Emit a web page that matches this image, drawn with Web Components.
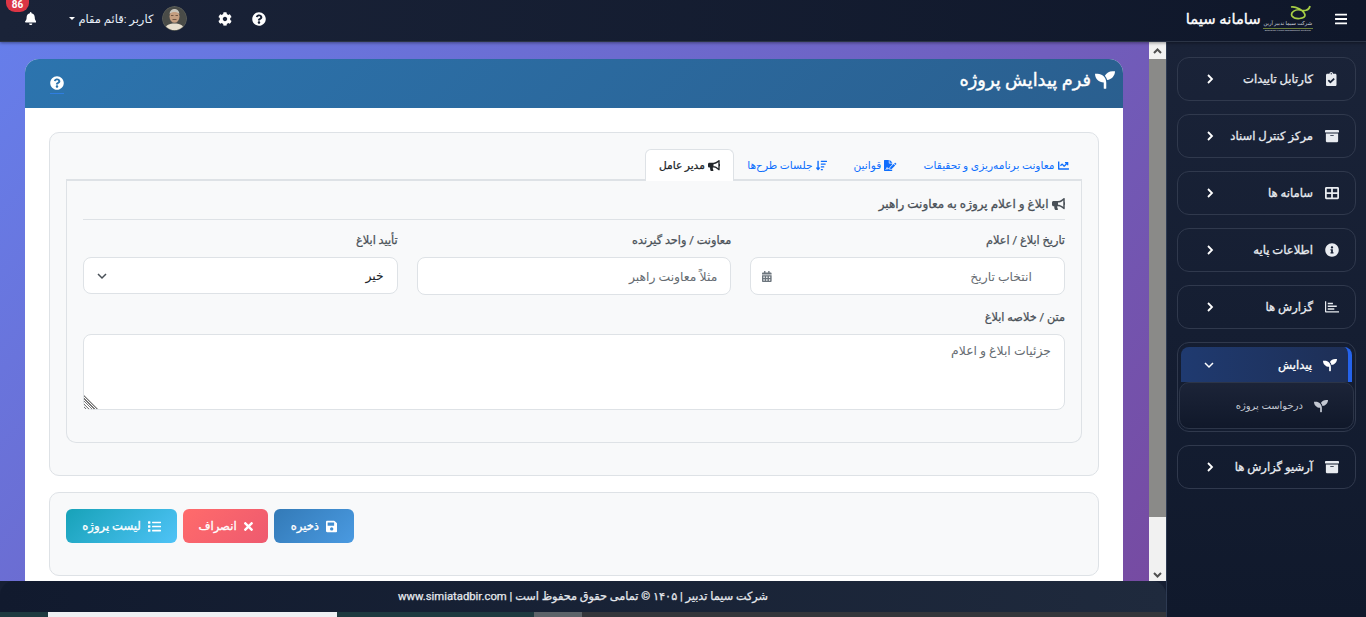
<!DOCTYPE html>
<html lang="fa">
<head>
<meta charset="utf-8">
<title>فرم پیدایش پروژه</title>
<style>
  html, body { margin: 0; height: 100%; overflow: hidden; }
  body { font-family: "Roboto", "DejaVu Sans", sans-serif; font-size: 12px; background: #161f33; }
</style>
</head>
<body>
<app-shell>
  <top-bar slot="top"></top-bar>
  <side-nav slot="side">
    <nav-item icon="clipboard">کارتابل تاییدات</nav-item>
    <nav-item icon="archive">مرکز کنترل اسناد</nav-item>
    <nav-item icon="grid">سامانه ها</nav-item>
    <nav-item icon="info">اطلاعات پایه</nav-item>
    <nav-item icon="report">گزارش ها</nav-item>
    <nav-item icon="seedling" open sub="درخواست پروژه">پیدایش</nav-item>
    <nav-item icon="archive">آرشیو گزارش ها</nav-item>
  </side-nav>
  <project-form slot="main"></project-form>
  <app-footer slot="footer"></app-footer>
</app-shell>

<script>
const ICONS = {
  bell: [448, 'M224 512c35.32 0 63.97-28.65 63.97-64H160.03c0 35.35 28.65 64 63.97 64zm215.39-149.71c-19.32-20.76-55.47-51.99-55.47-154.29 0-77.7-54.48-139.9-127.94-155.16V32c0-17.67-14.32-32-31.98-32s-31.98 14.33-31.98 32v20.84C118.56 68.1 64.08 130.3 64.08 208c0 102.3-36.15 133.53-55.47 154.29-6 6.45-8.66 14.16-8.61 21.71.11 16.4 12.98 32 32.1 32h383.8c19.12 0 32-15.6 32.1-32 .05-7.55-2.61-15.27-8.61-21.71z'],
  help: [512, 'M504 256c0 136.997-111.043 248-248 248S8 392.997 8 256C8 119.083 119.043 8 256 8s248 111.083 248 248zM262.655 90c-54.497 0-89.255 22.957-116.549 63.758-3.536 5.286-2.353 12.415 2.715 16.258l34.699 26.31c5.205 3.947 12.621 3.008 16.665-2.122 17.864-22.658 30.113-35.797 57.303-35.797 20.429 0 45.698 13.148 45.698 32.958 0 14.976-12.363 22.667-32.534 33.976C247.128 238.528 216 254.941 216 296v4c0 6.627 5.373 12 12 12h56c6.627 0 12-5.373 12-12v-1.333c0-28.462 83.186-29.647 83.186-106.667 0-58.002-60.165-102-116.531-102zM256 338c-25.365 0-46 20.635-46 46 0 25.364 20.635 46 46 46s46-20.636 46-46c0-25.365-20.635-46-46-46z'],
  seedling: [512, 'M64 96H0c0 123.7 100.3 224 224 224v144c0 8.8 7.2 16 16 16h32c8.8 0 16-7.2 16-16V320C288 196.3 187.7 96 64 96zm384-64c-84.2 0-157.4 46.5-195.7 115.2 27.7 30.2 48.2 66.9 59 107.6C424 243.1 512 147.9 512 32h-64z'],
  archive: [512, 'M32 448c0 17.7 14.3 32 32 32h384c17.7 0 32-14.3 32-32V160H32v288zm160-212c0-6.6 5.4-12 12-12h104c6.6 0 12 5.4 12 12v8c0 6.6-5.4 12-12 12H204c-6.6 0-12-5.4-12-12v-8zM480 32H32C14.3 32 0 46.3 0 64v48c0 8.8 7.2 16 16 16h480c8.8 0 16-7.2 16-16V64c0-17.7-14.3-32-32-32z'],
  clipboard: [384, 'M336 64h-80c0-35.3-28.7-64-64-64s-64 28.7-64 64H48C21.5 64 0 85.5 0 112v352c0 26.5 21.5 48 48 48h288c26.5 0 48-21.5 48-48V112c0-26.5-21.5-48-48-48zM192 40c13.3 0 24 10.7 24 24s-10.7 24-24 24-24-10.7-24-24 10.7-24 24-24zm121.2 231.8l-143 141.8c-4.7 4.7-12.3 4.6-17-.1l-82.6-83.3c-4.7-4.7-4.6-12.3.1-17L99.1 285c4.7-4.7 12.3-4.6 17 .1l46 46.4 106-105.2c4.7-4.7 12.3-4.6 17 .1l28.2 28.4c4.7 4.8 4.6 12.3-.1 17z'],
  grid: [512, 'M464 32H48C21.5 32 0 53.5 0 80v352c0 26.5 21.5 48 48 48h416c26.5 0 48-21.5 48-48V80c0-26.5-21.5-48-48-48zM224 416H64V288h160v128zm0-192H64V96h160v128zm224 192H288V288h160v128zm0-192H288V96h160v128z'],
  info: [512, 'M256 8C119.043 8 8 119.083 8 256c0 136.997 111.043 248 248 248s248-111.003 248-248C504 119.083 392.957 8 256 8zm0 110c23.196 0 42 18.804 42 42s-18.804 42-42 42-42-18.804-42-42 18.804-42 42-42zm56 254c0 6.627-5.373 12-12 12h-88c-6.627 0-12-5.373-12-12v-24c0-6.627 5.373-12 12-12h12v-64h-12c-6.627 0-12-5.373-12-12v-24c0-6.627 5.373-12 12-12h64c6.627 0 12 5.373 12 12v100h12c6.627 0 12 5.373 12 12v24z'],
  report: [512, 'M0 48h44v360h468v52H32c-17.7 0-32-14.300-32-32zM100 100h190v56H100zM100 200h330v56H100zM100 300h240v56H100z'],
  chart: [512, 'M496 384H64V80c0-8.84-7.16-16-16-16H16C7.16 64 0 71.16 0 80v336c0 17.67 14.33 32 32 32h464c8.84 0 16-7.16 16-16v-32c0-8.84-7.16-16-16-16zM464 96H345.94c-21.38 0-32.09 25.85-16.97 40.97l32.4 32.4L288 242.75l-73.37-73.37c-12.5-12.5-32.76-12.5-45.25 0l-68.69 68.69c-6.25 6.25-6.25 16.38 0 22.63l22.62 22.62c6.25 6.25 16.38 6.25 22.63 0L192 237.25l73.37 73.37c12.5 12.5 32.76 12.5 45.25 0l96-96 32.4 32.4c15.12 15.12 40.97 4.41 40.97-16.97V112c.01-8.84-7.15-16-15.99-16z'],
  bullhorn: [576, 'M576 240c0-23.63-12.95-44.04-32-55.12V32.01C544 23.26 537.02 0 512 0c-7.12 0-14.19 2.38-19.98 7.02l-85.03 68.03C364.28 109.19 310.66 128 256 128H64c-35.35 0-64 28.65-64 64v96c0 35.35 28.65 64 64 64h33.7c-1.39 10.48-2.18 21.14-2.18 32 0 39.77 9.26 77.35 25.56 110.94 5.19 10.69 16.52 17.06 28.4 17.06h74.28c26.05 0 41.69-29.84 25.9-50.56-16.4-21.52-26.15-48.36-26.15-77.44 0-11.11 1.62-21.79 4.41-32H256c54.66 0 108.28 18.81 150.98 52.95l85.03 68.03a32.023 32.023 0 0 0 19.98 7.02c24.92 0 32-22.78 32-32V295.13C563.05 284.04 576 263.63 576 240zm-96 141.42l-33.05-26.44C392.95 311.78 325.12 288 256 288v-96c69.12 0 136.95-23.78 190.95-66.98L480 98.58v282.84z'],
  save: [448, 'M433.941 129.941l-83.882-83.882A48 48 0 0 0 316.118 32H48C21.49 32 0 53.49 0 80v352c0 26.51 21.49 48 48 48h352c26.51 0 48-21.49 48-48V163.882a48 48 0 0 0-14.059-33.941zM224 416c-35.346 0-64-28.654-64-64 0-35.346 28.654-64 64-64s64 28.654 64 64c0 35.346-28.654 64-64 64zm96-304.52V212c0 6.627-5.373 12-12 12H76c-6.627 0-12-5.373-12-12V108c0-6.627 5.373-12 12-12h228.52c3.183 0 6.235 1.264 8.485 3.515l3.48 3.48A11.996 11.996 0 0 1 320 111.48z'],
  times: [352, 'M242.72 256l100.07-100.07c12.28-12.28 12.28-32.19 0-44.48l-22.24-22.24c-12.28-12.28-32.19-12.28-44.48 0L176 189.28 75.93 89.21c-12.28-12.28-32.19-12.28-44.48 0L9.21 111.45c-12.28 12.28-12.28 32.19 0 44.48L109.28 256 9.21 356.07c-12.28 12.28-12.28 32.19 0 44.48l22.24 22.24c12.28 12.28 32.2 12.28 44.48 0L176 322.72l100.07 100.07c12.28 12.28 32.2 12.28 44.48 0l22.24-22.24c12.28-12.28 12.28-32.19 0-44.48L242.72 256z'],
  list: [512, 'M80 368H16a16 16 0 0 0-16 16v64a16 16 0 0 0 16 16h64a16 16 0 0 0 16-16v-64a16 16 0 0 0-16-16zm0-320H16A16 16 0 0 0 0 64v64a16 16 0 0 0 16 16h64a16 16 0 0 0 16-16V64a16 16 0 0 0-16-16zm0 160H16a16 16 0 0 0-16 16v64a16 16 0 0 0 16 16h64a16 16 0 0 0 16-16v-64a16 16 0 0 0-16-16zm416 176H176a16 16 0 0 0-16 16v32a16 16 0 0 0 16 16h320a16 16 0 0 0 16-16v-32a16 16 0 0 0-16-16zm0-320H176a16 16 0 0 0-16 16v32a16 16 0 0 0 16 16h320a16 16 0 0 0 16-16V80a16 16 0 0 0-16-16zm0 160H176a16 16 0 0 0-16 16v32a16 16 0 0 0 16 16h320a16 16 0 0 0 16-16v-32a16 16 0 0 0-16-16z'],
  calendar: [448, 'M0 464c0 26.5 21.5 48 48 48h352c26.5 0 48-21.5 48-48V192H0v272zm320-196c0-6.6 5.4-12 12-12h40c6.6 0 12 5.4 12 12v40c0 6.6-5.4 12-12 12h-40c-6.6 0-12-5.4-12-12v-40zm0 128c0-6.6 5.4-12 12-12h40c6.6 0 12 5.4 12 12v40c0 6.6-5.4 12-12 12h-40c-6.6 0-12-5.4-12-12v-40zM192 268c0-6.6 5.4-12 12-12h40c6.6 0 12 5.4 12 12v40c0 6.6-5.4 12-12 12h-40c-6.6 0-12-5.4-12-12v-40zm0 128c0-6.6 5.4-12 12-12h40c6.6 0 12 5.4 12 12v40c0 6.6-5.4 12-12 12h-40c-6.6 0-12-5.4-12-12v-40zM64 268c0-6.6 5.4-12 12-12h40c6.6 0 12 5.4 12 12v40c0 6.6-5.4 12-12 12H76c-6.6 0-12-5.4-12-12v-40zm0 128c0-6.6 5.4-12 12-12h40c6.6 0 12 5.4 12 12v40c0 6.6-5.4 12-12 12H76c-6.6 0-12-5.4-12-12v-40zM400 64h-48V16c0-8.8-7.2-16-16-16h-32c-8.8 0-16 7.2-16 16v48H160V16c0-8.8-7.2-16-16-16h-32c-8.8 0-16 7.2-16 16v48H48C21.5 64 0 85.5 0 112v48h448v-48c0-26.5-21.5-48-48-48z'],
  bars: [448, 'M16 132h416c8.837 0 16-7.163 16-16V76c0-8.837-7.163-16-16-16H16C7.163 60 0 67.163 0 76v40c0 8.837 7.163 16 16 16zm0 160h416c8.837 0 16-7.163 16-16v-40c0-8.837-7.163-16-16-16H16c-8.837 0-16 7.163-16 16v40c0 8.837 7.163 16 16 16zm0 160h416c8.837 0 16-7.163 16-16v-40c0-8.837-7.163-16-16-16H16c-8.837 0-16 7.163-16 16v40c0 8.837 7.163 16 16 16z'],
  cog: [512, 'M487.4 315.7l-42.6-24.6c4.3-23.2 4.3-47 0-70.2l42.6-24.6c4.9-2.8 7.1-8.6 5.5-14-11.1-35.6-30-67.8-54.7-94.6-3.8-4.1-10-5.1-14.8-2.3L380.8 110c-17.9-15.4-38.5-27.3-60.8-35.1V25.8c0-5.6-3.9-10.5-9.4-11.7-36.7-8.2-74.3-7.8-109.2 0-5.5 1.2-9.4 6.1-9.4 11.7V75c-22.2 7.9-42.8 19.8-60.8 35.1L88.7 85.5c-4.9-2.8-11-1.9-14.8 2.3-24.7 26.7-43.6 58.9-54.7 94.6-1.7 5.4.6 11.2 5.5 14L67.3 221c-4.3 23.2-4.3 47 0 70.2l-42.6 24.6c-4.9 2.8-7.1 8.6-5.5 14 11.1 35.6 30 67.8 54.7 94.6 3.8 4.1 10 5.1 14.8 2.3l42.6-24.6c17.9 15.4 38.5 27.3 60.8 35.1v49.2c0 5.6 3.9 10.5 9.4 11.7 36.7 8.2 74.3 7.8 109.2 0 5.5-1.2 9.4-6.1 9.4-11.7v-49.2c22.2-7.9 42.8-19.8 60.8-35.1l42.6 24.6c4.9 2.8 11 1.9 14.8-2.3 24.7-26.7 43.6-58.9 54.7-94.6 1.5-5.5-.7-11.3-5.6-14.1zM256 336c-44.1 0-80-35.9-80-80s35.9-80 80-80 80 35.9 80 80-35.9 80-80 80z'],
  sign: [576, 'M218.17 424.14c-2.95-5.92-8.09-6.52-10.17-6.52s-7.22.59-10.02 6.19l-7.67 15.34c-6.37 12.78-25.03 11.37-29.48-2.09L144 386.59l-10.61 31.88c-5.89 17.66-22.38 29.53-41 29.53H80c-8.84 0-16-7.16-16-16s7.16-16 16-16h12.39c4.83 0 9.11-3.08 10.64-7.66l18.19-54.64c3.3-9.81 12.44-16.41 22.78-16.41s19.48 6.59 22.77 16.41l13.88 41.64c19.75-16.19 54.06-9.7 66 14.16 1.89 3.78 5.49 5.95 9.36 6.26v-82.12l128-127.09V160H248c-13.2 0-24-10.8-24-24V0H24C10.7 0 0 10.7 0 24v464c0 13.3 10.7 24 24 24h336c13.3 0 24-10.7 24-24v-40l-128-.11c-16.12-.31-30.58-9.28-37.83-23.75zM384 121.9c0-6.3-2.5-12.4-7-16.9L279.1 7c-4.5-4.5-10.6-7-17-7H256v128h128v-6.1zm-96 225.06V416h68.99l161.68-162.78-67.88-67.88L288 346.96zm280.54-179.63l-31.87-31.87c-9.94-9.94-26.07-9.94-36.01 0l-27.25 27.25 67.88 67.88 27.25-27.25c9.95-9.94 9.95-26.07 0-36.01z'],
  sort: [512, 'M304 416h-64a16 16 0 0 0-16 16v32a16 16 0 0 0 16 16h64a16 16 0 0 0 16-16v-32a16 16 0 0 0-16-16zm-128-64h-48V48a16 16 0 0 0-16-16H80a16 16 0 0 0-16 16v304H16c-14.19 0-21.37 17.24-11.29 27.31l80 96a16 16 0 0 0 22.62 0l80-96C197.35 369.26 190.22 352 176 352zm256-192H240a16 16 0 0 0-16 16v32a16 16 0 0 0 16 16h192a16 16 0 0 0 16-16v-32a16 16 0 0 0-16-16zm-64 128H240a16 16 0 0 0-16 16v32a16 16 0 0 0 16 16h128a16 16 0 0 0 16-16v-32a16 16 0 0 0-16-16zM496 32H240a16 16 0 0 0-16 16v32a16 16 0 0 0 16 16h256a16 16 0 0 0 16-16V48a16 16 0 0 0-16-16z'],
};

class FaIcon extends HTMLElement {
  connectedCallback() {
    const [w, d] = ICONS[this.getAttribute('name')];
    const size = this.getAttribute('size') || 12;
    this.attachShadow({ mode: 'open' });
    this.shadowRoot.innerHTML = `
      <style>:host { display: inline-flex; flex: none; justify-content: center; -webkit-text-stroke: 0; } svg { display: block; fill: currentColor; height: ${size}px; }</style>
      <svg viewBox="0 0 ${w} 512"><path d="${d}"/></svg>`;
  }
}
customElements.define('fa-icon', FaIcon);

const CHEV_LEFT = '<svg width="10" height="10" viewBox="0 0 10 10" fill="none" stroke="currentColor" stroke-width="1.8"><path d="M3 1l4 4-4 4"/></svg>';
const CHEV_DOWN = '<svg width="10" height="10" viewBox="0 0 10 10" fill="none" stroke="currentColor" stroke-width="1.5"><path d="M1 3l4 4 4-4"/></svg>';

class AppShell extends HTMLElement {
  constructor() {
    super();
    this.attachShadow({ mode: 'open' });
    this.shadowRoot.innerHTML = `
      <style>
        :host { display: grid; height: 617px; width: 1366px; overflow: hidden;
          grid-template-columns: 1166px 200px; grid-template-rows: 42px 539px 31px 5px; background: #161f33; }
        .top { grid-column: 1 / 3; grid-row: 1; }
        .main { grid-column: 1; grid-row: 2; display: flex; min-height: 0; overflow: hidden; }
        .canvas { flex: 1; min-width: 0; overflow: hidden; background: linear-gradient(135deg, #667eea 0%, #764ba2 100%); }
        .side { grid-column: 2; grid-row: 2 / 5; min-height: 0; }
        .foot { grid-column: 1; grid-row: 3; }
        .strip { grid-column: 1; grid-row: 4; display: flex; background: #1e3a40; }
        .strip i:nth-child(1) { width: 48px; }
        .strip i:nth-child(2) { width: 289px; background: #eef0f3; }
        .strip i:nth-child(3) { width: 197px; }
        .strip i:nth-child(4) { width: 48px; background: #5c6369; }
        .strip i:nth-child(5) { flex: 1; background: #34363b; }
        .bar { width: 17px; background: #8a8a88; display: flex; flex-direction: column; flex: none; }
        .bar b { height: 17px; background: #f1f1f1; color: #505050; display: flex; align-items: center; justify-content: center; }
        .bar span { flex: 1; }
        .bar em { height: 64px; background: #f1f1f1; display: flex; flex-direction: column; justify-content: flex-end; color: #505050; align-items: center; font-style: normal; padding-bottom: 3px; box-sizing: border-box; }
      </style>
      <div class="top"><slot name="top"></slot></div>
      <div class="main">
        <div class="canvas"><slot name="main"></slot></div>
        <div class="bar">
          <b><svg width="9" height="6" viewBox="0 0 9 6" fill="none" stroke="currentColor" stroke-width="2"><path d="M1 5l3.5-3.5L8 5"/></svg></b>
          <span></span>
          <em><svg width="9" height="6" viewBox="0 0 9 6" fill="none" stroke="currentColor" stroke-width="2"><path d="M1 1l3.5 3.5L8 1"/></svg></em>
        </div>
      </div>
      <div class="side"><slot name="side"></slot></div>
      <div class="foot"><slot name="footer"></slot></div>
      <div class="strip"><i></i><i></i><i></i><i></i><i></i></div>`;
  }
}
customElements.define('app-shell', AppShell);

class TopBar extends HTMLElement {
  constructor() {
    super();
    this.attachShadow({ mode: 'open' });
    this.shadowRoot.innerHTML = `
      <style>
        :host { display: flex; align-items: center; height: 42px; box-sizing: border-box; padding-bottom: 4px; color: #fff;
          background: linear-gradient(90deg, #1a2338 0%, #0f172a 100%); border-bottom: 1px solid #2b3446;
          box-shadow: 0 1px 3px rgba(0,0,0,.4); position: relative; }
        .bell { margin-left: 25px; position: relative; display: flex; color: #fff; }
        .badge { position: absolute; top: -12px; left: -19px; width: 23px; height: 12px; background: #dc3545;
          border-radius: 0 0 9px 9px; font: bold 10px/10px "Roboto", sans-serif; text-align: center; color: #fff; }
        .user { display: flex; align-items: center; margin-left: 33px; font-size: 11.5px; color: #e8f0fa; gap: 3px; }
        .caret { width: 0; height: 0; border: 3px solid transparent; border-top-color: #fff; border-bottom: 0; }
        .avatar { width: 25px; height: 25px; border-radius: 50%; display: block; margin-left: 6px; }
        .gear { margin-left: 31px; display: flex; }
        .help { margin-left: 20px; display: flex; }
        .spacer { flex: 1; }
        .brand { font-size: 14.8px; -webkit-text-stroke: .35px currentColor; direction: rtl; margin-right: 2px; }
        .logo { width: 50px; height: 34px; position: relative; direction: rtl; margin-right: 22px; text-align: center; color: #cfd6dd; margin-top: 6px; }
        .logo svg { position: absolute; left: 27px; top: 0; }
        .logo small { position: absolute; right: 0; left: 0; top: 15px; font-size: 5.2px; line-height: 7px; white-space: nowrap; }
        .logo u { position: absolute; right: 0; left: 0; top: 23px; text-decoration: none; font: 2.5px/4px "Roboto", sans-serif; white-space: nowrap; border-top: 1px solid #6a7f3a; }
        .menu { margin-right: 19px; display: flex; }
      </style>
      <span class="bell"><span class="badge">86</span><fa-icon name="bell" size="13"></fa-icon></span>
      <div class="user">
        <span class="caret"></span>
        <span dir="rtl">کاربر :قائم مقام</span>
        <svg class="avatar" viewBox="0 0 25 25">
          <circle cx="12.5" cy="12.5" r="12.5" fill="#5b5d58"/>
          <clipPath id="av"><circle cx="12.5" cy="12.5" r="11.6"/></clipPath>
          <g clip-path="url(#av)">
            <rect width="25" height="25" fill="#4a4c48"/>
            <path d="M2 26c1-7 5-8.500 10.500-8.500S22 19 23 26z" fill="#e8e0cf"/>
            <ellipse cx="12.500" cy="10.500" rx="5" ry="6.300" fill="#c49e80"/>
            <path d="M7.500 8c.5-4 3-5 5-5s4.500 1 5 5c-1.500-1.500-3-2-5-2s-3.500.5-5 2z" fill="#c9c6bd"/>
            <path d="M9 9.500h2.500M13.500 9.500H16M10.500 13.500h4" stroke="#5e4636" stroke-width=".8"/>
          </g>
        </svg>
      </div>
      <span class="gear"><fa-icon name="cog" size="14"></fa-icon></span>
      <span class="help"><fa-icon name="help" size="14"></fa-icon></span>
      <span class="spacer"></span>
      <span class="brand">سامانه سیما</span>
      <div class="logo">
        <svg width="22" height="16" viewBox="0 0 22 16" fill="none" stroke="#a8cf45" stroke-width="1.700">
          <path d="M1 2C5 1 14 5 15 10 15 14 5 15 2 11 0 7 6 4 10 5 14 6 19 6 20 1"/>
        </svg>
        <small>شرکت سیما تدبیر آرین</small>
        <u>Enterprise Project Management Solutions</u>
      </div>
      <span class="menu"><fa-icon name="bars" size="14"></fa-icon></span>`;
  }
}
customElements.define('top-bar', TopBar);

class SideNav extends HTMLElement {
  constructor() {
    super();
    this.attachShadow({ mode: 'open' });
    this.shadowRoot.innerHTML = `
      <style>
        :host { display: flex; flex-direction: column; gap: 13px; height: 100%; box-sizing: border-box; padding: 15px 10px 0 10px;
          background: linear-gradient(180deg, #1a2338, #10192c); border-left: 1px solid #2d3a52; }
      </style>
      <slot></slot>`;
  }
}
customElements.define('side-nav', SideNav);

class NavItem extends HTMLElement {
  constructor() {
    super();
    this.attachShadow({ mode: 'open' });
  }
  connectedCallback() {
    const open = this.hasAttribute('open');
    this.shadowRoot.innerHTML = `
      <style>
        :host { display: block; box-sizing: border-box; direction: rtl; border: 1px solid #30394d; border-radius: 12px; color: #e8ebf0; font-size: 11.6px; }
        :host([open]) { padding: 4px 3px 2px; position: relative; }
        .row { display: flex; align-items: center; height: 42px; padding-right: 16px; }
        .row fa-icon { width: 15px; }
        .label { margin-right: 11px; flex: 1; white-space: nowrap; -webkit-text-stroke: .3px currentColor; }
        .chev { margin-left: 27px; display: flex; color: #fff; }
        :host([open]) .row { height: 35px; background: linear-gradient(90deg, #1f3a70, #1e2f56); border-right: 4px solid #2563eb; border-radius: 8px 8px 0 0; color: #fff; padding-right: 11px; box-sizing: border-box; }
        :host([open]) .label { margin-right: 10px; }
        :host([open]) .chev { margin-left: 23px; }
        .sub { height: 47px; margin: 0 -2px; box-sizing: border-box; border: 1px solid #2c3548; border-radius: 10px; display: flex; align-items: center;
          padding-right: 25px; gap: 10px; font-size: 10px; color: #c3c8d2; background: linear-gradient(180deg, #1c2438, #10182a); position: relative; }
        .sub fa-icon { width: 15px; }
      </style>
      <div class="row">
        <fa-icon name="${this.getAttribute('icon')}" size="14"></fa-icon>
        <span class="label"><slot></slot></span>
        <span class="chev">${open ? CHEV_DOWN : CHEV_LEFT}</span>
      </div>
      ${open ? `<div class="sub"><fa-icon name="seedling" size="14"></fa-icon><span>${this.getAttribute('sub')}</span></div>` : ''}`;
  }
}
customElements.define('nav-item', NavItem);

class FormField extends HTMLElement {
  constructor() {
    super();
    this.attachShadow({ mode: 'open' });
  }
  connectedCallback() {
    const kind = this.getAttribute('kind');
    const value = this.getAttribute('value');
    let inner = `<div class="box"><span>${value}</span></div>`;
    if (kind === 'date') inner = `<div class="box date"><span>${value}</span><fa-icon name="calendar" size="11"></fa-icon></div>`;
    if (kind === 'select') inner = `<div class="box select"><span>${value}</span>${CHEV_DOWN}</div>`;
    if (kind === 'area') inner = `<div class="box area"><span>${value}</span><i></i></div>`;
    this.shadowRoot.innerHTML = `
      <style>
        :host { display: block; direction: rtl; }
        label { display: block; font-size: 11.3px; -webkit-text-stroke: .25px currentColor; color: #495057; line-height: 14px; margin-bottom: 9px; }
        .box { height: 38px; box-sizing: border-box; background: #fff; border: 1px solid #dee2e6; border-radius: 8px; padding: 0 13px; display: flex; align-items: center; font-size: 12.4px; color: #666c72; }
        .date { justify-content: space-between; padding: 0 32px 0 11px; }
        .date fa-icon { color: #6c757d; }
        .select { justify-content: space-between; color: #212529; height: 37px; }
        .select svg { color: #495057; }
        .area { height: 76px; align-items: flex-start; padding-top: 8px; position: relative; }
        .area i { position: absolute; left: 0; bottom: 0; width: 14px; height: 14px; background: repeating-linear-gradient(45deg, transparent 0 1px, #777 1px 2px); clip-path: polygon(0 0, 100% 100%, 0 100%); }
      </style>
      <label>${this.getAttribute('label')}</label>
      ${inner}`;
  }
}
customElements.define('form-field', FormField);

class GradButton extends HTMLElement {
  constructor() {
    super();
    this.attachShadow({ mode: 'open' });
  }
  connectedCallback() {
    this.shadowRoot.innerHTML = `
      <style>
        :host { display: inline-flex; align-items: center; justify-content: center; gap: 7px; height: 34px; box-sizing: border-box; direction: rtl; white-space: nowrap;
          border-radius: 6px; color: #fff; font-size: 11.6px; -webkit-text-stroke: .3px currentColor; background: var(--bg); }
      </style>
      <fa-icon name="${this.getAttribute('icon')}" size="13"></fa-icon><slot></slot>`;
  }
}
customElements.define('grad-button', GradButton);

class ProjectForm extends HTMLElement {
  constructor() {
    super();
    this.attachShadow({ mode: 'open' });
    this.shadowRoot.innerHTML = `
      <style>
        :host { display: block; padding: 17px 26px 0 25px; height: 100%; box-sizing: border-box; }
        .card { border-radius: 14px 14px 0 0; background: #fff; height: 522px; }
        .head { height: 49px; border-radius: 14px 14px 0 0; background: linear-gradient(135deg, #2c74ae, #2a5f8f); color: #fff; display: flex; align-items: center; justify-content: space-between; padding: 0 8px 0 25px; }
        .head h1 { margin: 0 0 8px; font-size: 17.8px; font-weight: 400; -webkit-text-stroke: .4px currentColor; direction: rtl; display: flex; align-items: center; gap: 4px; }
        .head .q { display: flex; border-bottom: 1px solid #2f7de0; padding-bottom: 3px; margin-top: 3px; }
        .body { padding: 24px 24px 0; }
        .panel { background: #f8f9fa; border: 1px solid #dee2e6; border-radius: 10px; box-sizing: border-box; }
        .main { height: 344px; padding: 16px 16px 0; }
        nav { display: flex; direction: rtl; height: 30px; border-bottom: 2px solid #dee2e6; }
        nav a { display: flex; align-items: center; gap: 3px; padding: 0 13.5px; color: #0d6efd; font-size: 10.6px; height: 32px; box-sizing: border-box; white-space: nowrap; }
        nav a.active { background: #fff; color: #212529; -webkit-text-stroke: .25px currentColor; border: 1px solid #dee2e6; border-bottom: 0; border-radius: 6px 6px 0 0; padding: 0 12.5px; }
        .pane { height: 262px; border: 1px solid #dee2e6; border-top: 0; border-radius: 0 0 10px 10px; padding: 0 16px; box-sizing: border-box; direction: rtl; }
        h2 { margin: 0; height: 39px; padding-top: 8px; font-size: 12px; font-weight: 400; -webkit-text-stroke: .3px currentColor; color: #495057; display: flex; align-items: center; gap: 3px; border-bottom: 1px solid #dee2e6; box-sizing: border-box; }
        .grid { display: grid; grid-template-columns: repeat(3, 1fr); gap: 19px; margin-top: 14px; }
        .full { margin-top: 16px; }
        .actions { height: 84px; margin-top: 16px; padding: 16px; display: flex; justify-content: flex-start; align-items: flex-start; }
        .btns { display: flex; gap: 6px; }
      </style>
      <div class="card">
        <div class="head">
          <span class="q"><fa-icon name="help" size="14"></fa-icon></span>
          <h1><fa-icon name="seedling" size="20"></fa-icon>فرم پیدایش پروژه</h1>
        </div>
        <div class="body">
          <div class="panel main">
            <nav>
              <a><fa-icon name="chart" size="11"></fa-icon>معاونت برنامه‌ریزی و تحقیقات</a>
              <a><fa-icon name="sign" size="11"></fa-icon>قوانین</a>
              <a><fa-icon name="sort" size="11"></fa-icon>جلسات طرح‌ها</a>
              <a class="active"><fa-icon name="bullhorn" size="11"></fa-icon>مدیر عامل</a>
            </nav>
            <div class="pane">
              <h2><fa-icon name="bullhorn" size="12"></fa-icon>ابلاغ و اعلام پروژه به معاونت راهبر</h2>
              <div class="grid">
                <form-field kind="date" label="تاریخ ابلاغ / اعلام" value="انتخاب تاریخ"></form-field>
                <form-field label="معاونت / واحد گیرنده" value="مثلاً معاونت راهبر"></form-field>
                <form-field kind="select" label="تأیید ابلاغ" value="خیر"></form-field>
              </div>
              <form-field class="full" kind="area" label="متن / خلاصه ابلاغ" value="جزئیات ابلاغ و اعلام"></form-field>
            </div>
          </div>
          <div class="panel actions">
            <div class="btns">
              <grad-button icon="list" style="--bg: linear-gradient(135deg, #17a2b8, #4fc3f7); width: 111px">لیست پروژه</grad-button>
              <grad-button icon="times" style="--bg: linear-gradient(135deg, #ff6b6b, #ee5a6f); width: 85px">انصراف</grad-button>
              <grad-button icon="save" style="--bg: linear-gradient(135deg, #337ab7, #4a9ae1); width: 80px">ذخیره</grad-button>
            </div>
          </div>
        </div>
      </div>`;
  }
}
customElements.define('project-form', ProjectForm);

class AppFooter extends HTMLElement {
  constructor() {
    super();
    this.attachShadow({ mode: 'open' });
    this.shadowRoot.innerHTML = `
      <style>
        :host { display: flex; align-items: center; justify-content: center; height: 31px; color: #e6e9ee; font-size: 11.3px; -webkit-text-stroke: .25px currentColor;
          background: linear-gradient(90deg, #111a2e, #1f2a3d); border-radius: 14px 14px 0 0; direction: rtl; }
      </style>
      <span>شرکت سیما تدبیر | ۱۴۰۵ © تمامی حقوق محفوظ است | www.simiatadbir.com</span>`;
  }
}
customElements.define('app-footer', AppFooter);
</script>
</body>
</html>
